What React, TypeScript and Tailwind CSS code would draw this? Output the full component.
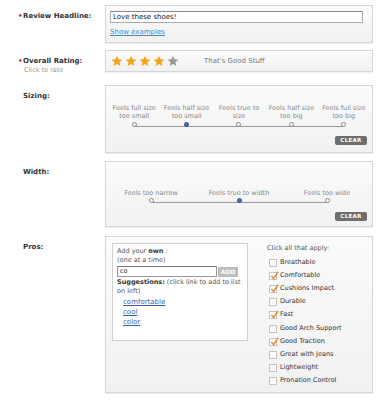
import React from "react";

const font = { fontFamily: '"DejaVu Sans", Verdana, sans-serif' };

function Star({ on }: { on: boolean }) {
  return (
    <svg width="12" height="12" viewBox="0 0 24 24">
      <polygon
        points="12,1.5 15.1,8.6 22.8,9.3 17,14.4 18.7,22 12,18 5.3,22 7,14.4 1.2,9.3 8.9,8.6"
        fill={on ? "#f5a31d" : "#9a9a9a"}
      />
    </svg>
  );
}

function Radio({ on }: { on?: boolean }) {
  return (
    <div
      className={
        "w-[5px] h-[5px] rounded-full border " +
        (on ? "bg-[#4a6fb0] border-[#2f4f8a]" : "bg-white border-[#888]")
      }
    />
  );
}

function Clear() {
  return (
    <div className="flex justify-end pr-[5px]">
      <div className="w-[32px] h-[9px] rounded-[2px] bg-[#6e6e6e] text-white text-[5.5px] font-bold leading-[9px] text-center tracking-[0.3px]">
        CLEAR
      </div>
    </div>
  );
}

function Check({ on }: { on: boolean }) {
  return (
    <div className="relative w-[8px] h-[8px] border border-[#c4c4c4] bg-white shrink-0">
      {on && (
        <svg className="absolute left-[0px] top-[-2px]" width="9" height="9" viewBox="0 0 10 10">
          <path d="M1.5 5.5 L4 8.5 L9 1" stroke="#e8862a" strokeWidth="1.6" fill="none" />
        </svg>
      )}
    </div>
  );
}

function Label({ children, req, sub }: { children: React.ReactNode; req?: boolean; sub?: string }) {
  return (
    <div className="w-[105px] shrink-0 pl-[18px] pt-[7px]">
      <div className="flex items-center text-[7px] font-bold text-[#333] leading-[9px]">
        <span className={"w-[5px] " + (req ? "text-[#c0282d]" : "text-transparent")}>•</span>
        <span>{children}</span>
      </div>
      {sub && <div className="pl-[6px] text-[6.5px] text-[#999] leading-[8px]">{sub}</div>}
    </div>
  );
}

const panel = "w-[268px] border border-[#d6d6d6] bg-gradient-to-b from-[#fbfbfb] to-[#f1f1f1] shadow-[0_1px_1px_rgba(0,0,0,0.06)]";

export default function App() {
  const sizes = [
    ["Feels full size", "too small"],
    ["Feels half size", "too small"],
    ["Feels true to", "size"],
    ["Feels half size", "too big"],
    ["Feels full size", "too big"],
  ];
  const pros: [string, boolean][] = [
    ["Breathable", false],
    ["Comfortable", true],
    ["Cushions Impact", true],
    ["Durable", false],
    ["Fast", true],
    ["Good Arch Support", false],
    ["Good Traction", true],
    ["Great with Jeans", false],
    ["Lightweight", false],
    ["Pronation Control", false],
  ];
  return (
    <div className="w-[385px] h-[400px] bg-white pt-[5px] text-[#444]" style={font}>
      {/* Review headline */}
      <div className="flex">
        <Label req>Review Headline:</Label>
        <div className={panel + " h-[38px] px-[4px] pt-[5px]"}>
          <div className="w-[253px] h-[12px] bg-white border border-[#aaa] border-t-[#888] px-[2px] text-[7px] leading-[10px] text-[#222]">
            Love these shoes!
          </div>
          <div className="mt-[5px] text-[7px] leading-[9px] text-[#3b8cc4] underline">Show examples</div>
        </div>
      </div>

      {/* Overall rating */}
      <div className="flex mt-[7px]">
        <Label req sub="Click to rate">Overall Rating:</Label>
        <div className={panel + " h-[22px] flex items-center pl-[5px]"}>
          <div className="flex gap-[2px]">
            <Star on />
            <Star on />
            <Star on />
            <Star on />
            <Star on={false} />
          </div>
          <div className="ml-[25px] text-[7px] text-[#777]">That's Good Stuff</div>
        </div>
      </div>

      {/* Sizing */}
      <div className="flex mt-[11px]">
        <Label>Sizing:</Label>
        <div className={panel + " h-[68px] pt-[18px]"}>
          <div className="relative">
            <div className="grid grid-cols-5 px-[2px]">
              {sizes.map((s, i) => (
                <div key={i} className="flex flex-col items-center">
                  <div className="text-[6.5px] leading-[8px] text-[#888] text-center whitespace-nowrap">
                    {s[0]}
                    <br />
                    {s[1]}
                  </div>
                  <div className="mt-[2px] relative z-10">
                    <Radio on={i === 1} />
                  </div>
                </div>
              ))}
            </div>
            <div className="absolute left-[28px] right-[29px] bottom-[0px] h-px bg-[#999]" />
          </div>
          <div className="mt-[9px]">
            <Clear />
          </div>
        </div>
      </div>

      {/* Width */}
      <div className="flex mt-[8px]">
        <Label>Width:</Label>
        <div className={panel + " h-[66px] pt-[27px]"}>
          <div className="relative">
            <div className="grid grid-cols-3 px-[1px]">
              {["Feels too narrow", "Feels true to width", "Feels too wide"].map((s, i) => (
                <div key={i} className="flex flex-col items-center">
                  <div className="text-[6.5px] leading-[8px] text-[#888] whitespace-nowrap">{s}</div>
                  <div className="mt-[1px] relative z-10">
                    <Radio on={i === 1} />
                  </div>
                </div>
              ))}
            </div>
            <div className="absolute left-[46px] right-[46px] bottom-[0px] h-px bg-[#999]" />
          </div>
          <div className="mt-[9px]">
            <Clear />
          </div>
        </div>
      </div>

      {/* Pros */}
      <div className="flex mt-[9px]">
        <Label>Pros:</Label>
        <div className={panel + " h-[157px] flex pl-[6px] pt-[6px]"}>
          <div className="w-[136px] h-[98px] bg-white border border-[#d0d0d0] pl-[4px] pt-[3px] text-[6.5px] leading-[9px] text-[#555]">
            <div>
              Add your <b className="text-[#333]">own</b> :
            </div>
            <div>(one at a time)</div>
            <div className="flex items-center mt-[1px]">
              <div className="w-[100px] h-[11px] border border-[#999] border-t-[#777] bg-white px-[2px] text-[6.5px] leading-[9px] text-[#333]">
                co
              </div>
              <div className="ml-[1px] w-[20px] h-[10px] bg-[#bdbdbd] text-white font-bold text-[6px] leading-[10px] text-center">
                ADD
              </div>
            </div>
            <div className="mt-[1px] whitespace-nowrap">
              <b className="text-[#333]">Suggestions:</b> (click link to add to list
            </div>
            <div>on left)</div>
            <div className="pl-[6px] mt-[1px] text-[7px] leading-[10px] text-[#3b5fb0] underline">
              <div>comfortable</div>
              <div>cool</div>
              <div>color</div>
            </div>
          </div>
          <div className="ml-[19px] pt-[1px]">
            <div className="text-[6.5px] leading-[9px] text-[#555]">Click all that apply:</div>
            <div className="mt-[3px] flex flex-col">
              {pros.map(([n, c]) => (
                <div key={n} className="flex items-center h-[13.2px] pl-[2px]">
                  <Check on={c} />
                  <span className="ml-[3px] text-[6.5px] text-[#333]">{n}</span>
                </div>
              ))}
            </div>
          </div>
        </div>
      </div>
    </div>
  );
}
